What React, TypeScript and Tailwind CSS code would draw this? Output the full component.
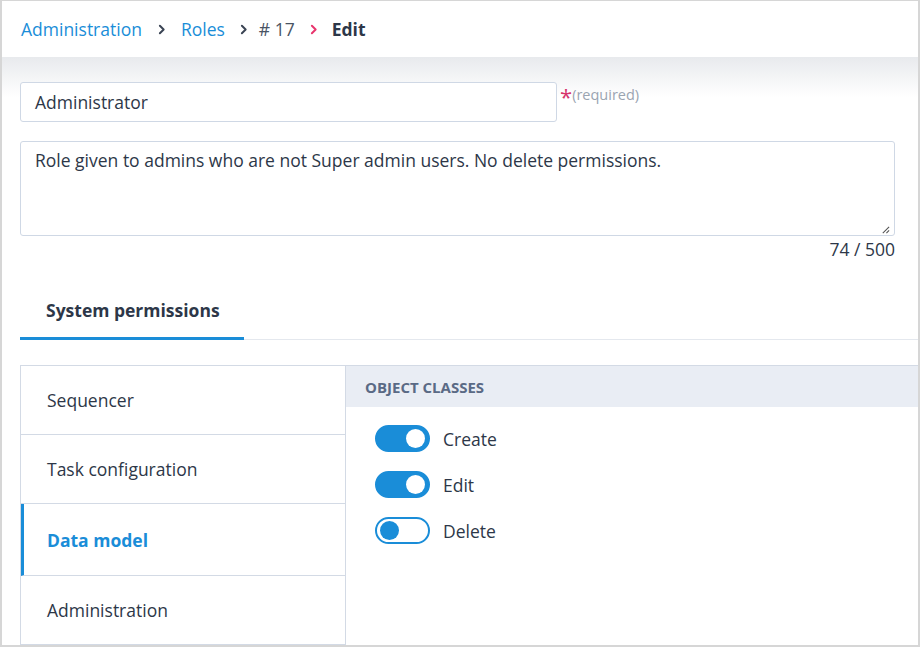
import React from 'react';

const font = { fontFamily: '"Open Sans", "Noto Sans", sans-serif' };

const Chevron = ({ className }: { className: string }) => (
  <svg viewBox="0 0 12 12" className={className} fill="none" stroke="currentColor" strokeWidth="1.8" strokeLinecap="round" strokeLinejoin="round">
    <path d="M4.5 2.5 8 6l-3.5 3.5" />
  </svg>
);

const Toggle = ({ on }: { on: boolean }) => (
  <div
    className={`flex h-[27px] w-[55px] items-center rounded-full border-2 border-[#1a8dd8] px-[3px] ${
      on ? 'justify-end bg-[#1a8dd8]' : 'justify-start bg-white'
    }`}
  >
    <span className={`h-[19px] w-[19px] rounded-full ${on ? 'bg-white' : 'bg-[#1a8dd8]'}`} />
  </div>
);

const sections = [
  { name: 'Sequencer', active: false },
  { name: 'Task configuration', active: false },
  { name: 'Data model', active: true },
  { name: 'Administration', active: false },
];

const perms = [
  { name: 'Create', on: true },
  { name: 'Edit', on: true },
  { name: 'Delete', on: false },
];

export default function App() {
  return (
    <div className="h-[647px] w-[920px] overflow-hidden bg-[#d6d6d6] pl-[2px] pr-[2px] pt-px pb-[2px]" style={font}>
      <div className="flex h-full flex-col overflow-hidden bg-white">
        <div className="relative z-10 flex h-[56px] shrink-0 items-center bg-white px-[19px] text-[17.5px]">
          <span className="text-[#1a8dd8]">Administration</span>
          <Chevron className="mx-[13px] h-[13px] w-[13px] text-[#3a4454]" />
          <span className="text-[#1a8dd8]">Roles</span>
          <Chevron className="ml-[12px] mr-[9px] h-[13px] w-[13px] text-[#3a4454]" />
          <span className="text-[#4a5463]">#&nbsp;17</span>
          <Chevron className="mx-[12px] h-[13px] w-[13px] text-[#e8356d]" />
          <span className="font-bold text-[#2d3748]">Edit</span>
        </div>
        <div className="flex flex-1 flex-col bg-gradient-to-b from-[#e8eaed] to-white to-[40px] pl-[18px] pt-[25px] text-[17.5px] leading-[24px]">
          <div className="flex items-start">
            <div className="flex h-[40px] w-[537px] items-center rounded-[3px] border border-[#cfd8e5] bg-white px-[14px] text-[#2d3748]">
              Administrator
            </div>
            <span className="ml-[3px] mt-[3px] text-[22px] leading-none text-[#d6336c]">*</span>
            <span className="mt-[1px] text-[14.5px] text-[#9aa4b1]">(required)</span>
          </div>
          <div className="mt-[19px] mr-[23px] flex h-[95px] items-start justify-between rounded-[3px] border border-[#cfd8e5] bg-white px-[14px] pt-[6px] text-[#2d3748]">
            <span>Role given to admins who are not Super admin users. No delete permissions.</span>
            <svg viewBox="0 0 10 10" className="mr-[-10px] mt-[77px] h-[9px] w-[9px] shrink-0 text-[#555]" stroke="currentColor" strokeWidth="1.2">
              <path d="M9 2 2 9M9 6 6 9" />
            </svg>
          </div>
          <div className="mr-[23px] mt-px text-right text-[#2d3748]">74 / 500</div>
          <div className="mt-[37px] flex border-b border-[#e4e8ee]">
            <div className="mb-[-1px] w-[224px] border-b-[3px] border-[#1a8dd8] pb-[15px] pl-[26px] font-bold text-[#2d3748]">
              System permissions
            </div>
          </div>
          <div className="mt-[25px] flex flex-1">
            <div className="w-[326px] border-x border-t border-[#d3dae5]">
              {sections.map((s) => (
                <div
                  key={s.name}
                  className={`flex items-center border-b border-[#d3dae5] ${
                    s.active
                      ? 'h-[72px] border-l-[3px] border-l-[#1a8dd8] pl-[23px] font-bold text-[#1a8dd8]'
                      : 'h-[69px] pl-[26px] text-[#2d3748]'
                  }`}
                >
                  {s.name}
                </div>
              ))}
            </div>
            <div className="flex-1 border-t border-[#d3dae5]">
              <div className="flex h-[41px] items-center bg-[#e9edf4] pl-[19px] text-[15px] font-bold text-[#5a6a85]">
                OBJECT CLASSES
              </div>
              <div className="flex flex-col gap-[19px] pl-[29px] pt-[18px]">
                {perms.map((p) => (
                  <div key={p.name} className="flex items-center gap-[13px] text-[#2d3748]">
                    <Toggle on={p.on} />
                    <span>{p.name}</span>
                  </div>
                ))}
              </div>
            </div>
          </div>
        </div>
      </div>
    </div>
  );
}
